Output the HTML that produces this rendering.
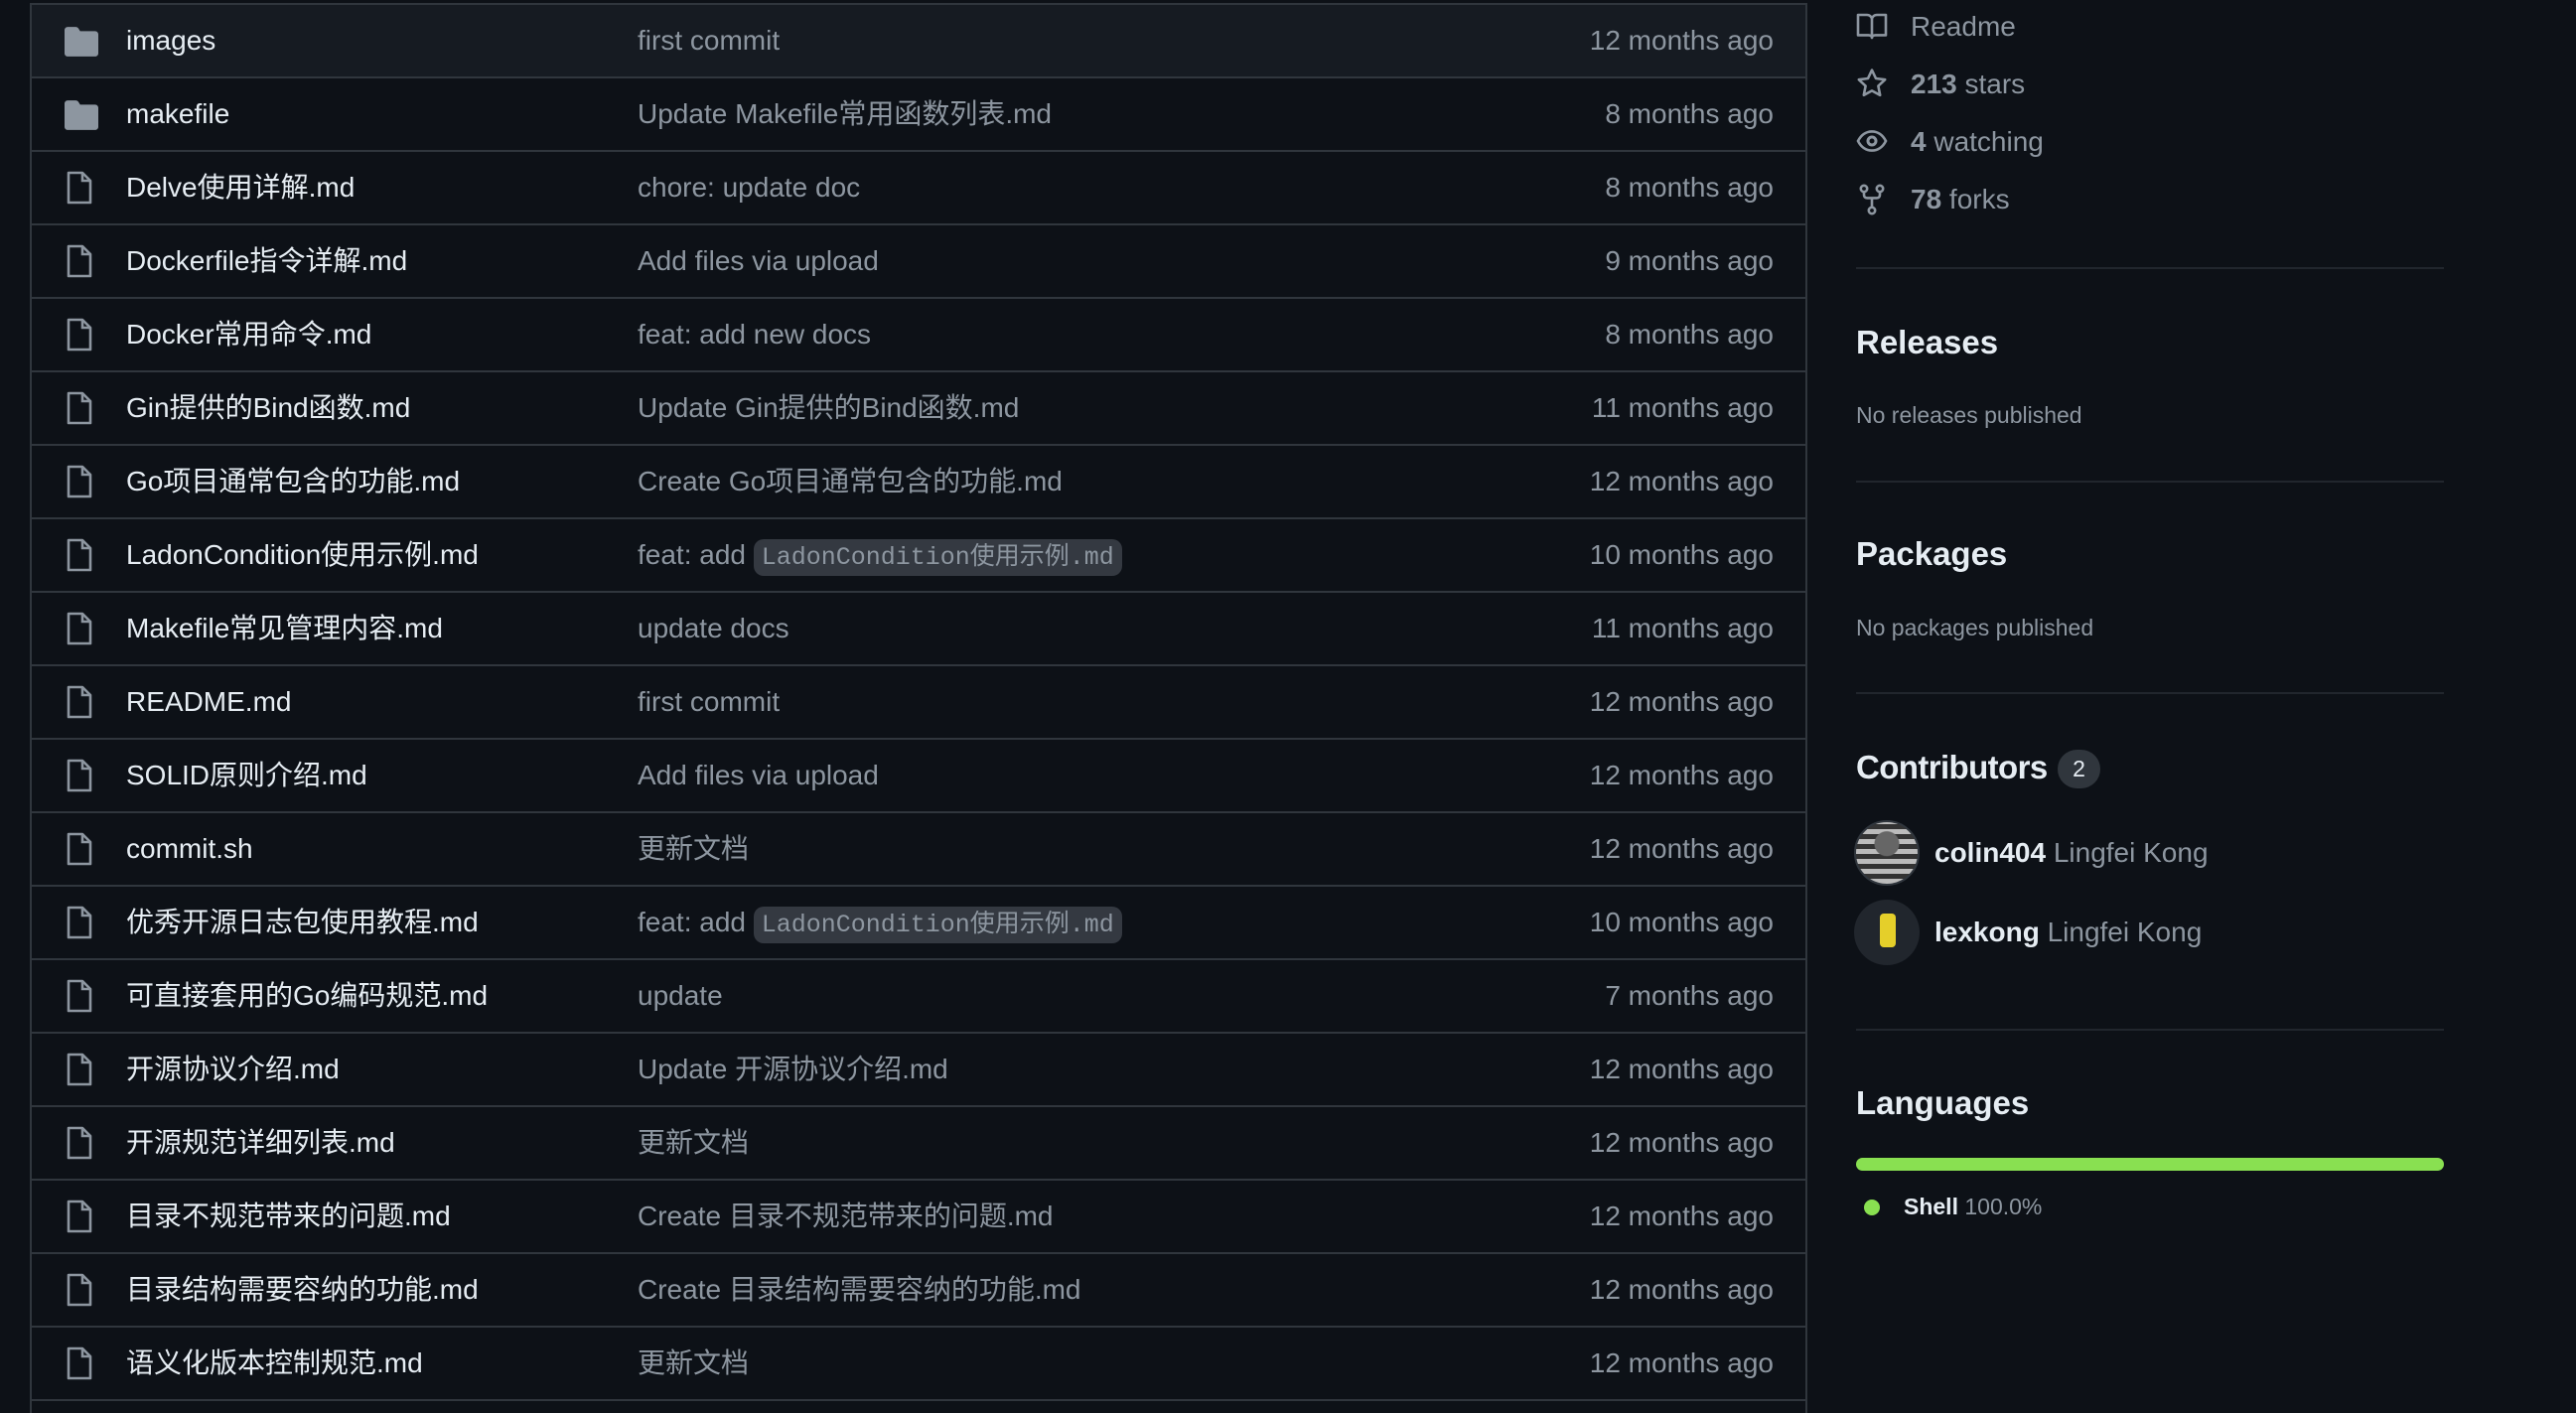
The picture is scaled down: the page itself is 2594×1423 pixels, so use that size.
<!DOCTYPE html>
<html><head><meta charset="utf-8"><style>
*{margin:0;padding:0;box-sizing:border-box}
body{width:2594px;height:1398px;background:#0d1117;overflow:hidden;font-family:"Liberation Sans","Noto Sans CJK SC",sans-serif;position:relative;color:#e6edf3}
.tbl{position:absolute;left:30px;top:3px;width:1790px;height:1420px;border-left:2px solid #30363d;border-right:2px solid #30363d;border-top:2px solid #30363d}
.row{position:absolute;left:0;width:1786px;height:74px;border-bottom:2px solid #30363d}
.row .ic{position:absolute;left:33px;top:22px}
.row .nm{position:absolute;left:95px;top:0;line-height:72px;font-size:28px;color:#e6edf3}
.row .msg{position:absolute;left:610px;top:0;line-height:72px;font-size:28px;color:#8d96a0;white-space:nowrap}
.row .dt{position:absolute;right:32px;top:0;line-height:72px;font-size:28px;color:#8d96a0}
code{font-family:"Liberation Mono","Noto Sans CJK SC",monospace;font-size:25px;background:#343941;border-radius:10px;padding:4px 8px;color:#8d96a0}
.sb{position:absolute;left:1869px;color:#8d96a0;font-size:28px}
.h{position:absolute;left:1869px;font-size:33px;font-weight:bold;color:#e6edf3}
.div{position:absolute;left:1869px;width:592px;height:2px;background:#21262d}
.sm{position:absolute;left:1869px;font-size:23px;color:#8d96a0}
</style></head><body>
<div class="tbl">
<div class="row" style="top:0;background:#161b22"><svg class="ic" width="34" height="30" viewBox="0 0 16 14" style="top:22px"><path d="M0 1.5C0 .7.7 0 1.5 0h3.8c.5 0 .9.2 1.2.6L7.4 2H14.5c.8 0 1.5.7 1.5 1.5v9c0 .8-.7 1.5-1.5 1.5h-13C.7 14 0 13.3 0 12.5z" fill="#8d96a0"/></svg><span class="nm">images</span><span class="msg">first commit</span><span class="dt">12 months ago</span></div>
<div class="row" style="top:74px"><svg class="ic" width="34" height="30" viewBox="0 0 16 14" style="top:22px"><path d="M0 1.5C0 .7.7 0 1.5 0h3.8c.5 0 .9.2 1.2.6L7.4 2H14.5c.8 0 1.5.7 1.5 1.5v9c0 .8-.7 1.5-1.5 1.5h-13C.7 14 0 13.3 0 12.5z" fill="#8d96a0"/></svg><span class="nm">makefile</span><span class="msg">Update Makefile常用函数列表.md</span><span class="dt">8 months ago</span></div>
</div>
<script>
var d=[["Delve使用详解.md","chore: update doc","8 months ago"],["Dockerfile指令详解.md","Add files via upload","9 months ago"],["Docker常用命令.md","feat: add new docs","8 months ago"],["Gin提供的Bind函数.md","Update Gin提供的Bind函数.md","11 months ago"],["Go项目通常包含的功能.md","Create Go项目通常包含的功能.md","12 months ago"],["LadonCondition使用示例.md","feat: add <code>LadonCondition使用示例.md</code>","10 months ago"],["Makefile常见管理内容.md","update docs","11 months ago"],["README.md","first commit","12 months ago"],["SOLID原则介绍.md","Add files via upload","12 months ago"],["commit.sh","更新文档","12 months ago"],["优秀开源日志包使用教程.md","feat: add <code>LadonCondition使用示例.md</code>","10 months ago"],["可直接套用的Go编码规范.md","update","7 months ago"],["开源协议介绍.md","Update 开源协议介绍.md","12 months ago"],["开源规范详细列表.md","更新文档","12 months ago"],["目录不规范带来的问题.md","Create 目录不规范带来的问题.md","12 months ago"],["目录结构需要容纳的功能.md","Create 目录结构需要容纳的功能.md","12 months ago"],["语义化版本控制规范.md","更新文档","12 months ago"]];
var t=document.querySelector('.tbl'),h='';
d.forEach(function(r,i){h+='<div class="row" style="top:'+(148+i*74)+'px"><svg class="ic" width="28" height="34" viewBox="0 0 14 17" style="left:34px;top:19px"><path d="M1.5 1h7L12.5 5v11h-11z" fill="none" stroke="#8d96a0" stroke-width="1.3" stroke-linejoin="round"/><path d="M8.5 1v4h4" fill="none" stroke="#8d96a0" stroke-width="1.3"/></svg><span class="nm">'+r[0]+'</span><span class="msg">'+r[1]+'</span><span class="dt">'+r[2]+'</span></div>'});
t.insertAdjacentHTML('beforeend',h);
</script>
<svg style="position:absolute;left:1869px;top:12px" width="32" height="28" viewBox="0 0 16 14"><path d="M1 1.5h4.5c1.3 0 2.5 1 2.5 2.3V13c0-.8-.8-1.3-1.7-1.3H1zM15 1.5h-4.5C9.2 1.5 8 2.5 8 3.8V13c0-.8.8-1.3 1.7-1.3H15z" fill="none" stroke="#8d96a0" stroke-width="1.3" stroke-linejoin="round"/></svg>
<div class="sb" style="left:1924px;top:11px">Readme</div>
<svg style="position:absolute;left:1869px;top:68px" width="32" height="32" viewBox="0 0 16 16"><path d="M8 1.3l2 4.2 4.6.6-3.4 3.2.9 4.6L8 11.7 3.9 13.9l.9-4.6L1.4 6.1 6 5.5z" fill="none" stroke="#8d96a0" stroke-width="1.3" stroke-linejoin="round"/></svg>
<div class="sb" style="left:1924px;top:69px"><b>213</b> stars</div>
<svg style="position:absolute;left:1869px;top:128px" width="32" height="28" viewBox="0 0 16 14"><path d="M1 7c1.5-3 4-4.8 7-4.8S13.5 4 15 7c-1.5 3-4 4.8-7 4.8S2.5 10 1 7z" fill="none" stroke="#8d96a0" stroke-width="1.3"/><circle cx="8" cy="7" r="2" fill="none" stroke="#8d96a0" stroke-width="1.5"/></svg>
<div class="sb" style="left:1924px;top:127px"><b>4</b> watching</div>
<svg style="position:absolute;left:1871px;top:185px" width="28" height="32" viewBox="0 0 14 16"><circle cx="3" cy="2.5" r="1.6" fill="none" stroke="#8d96a0" stroke-width="1.3"/><circle cx="11" cy="2.5" r="1.6" fill="none" stroke="#8d96a0" stroke-width="1.3"/><circle cx="7" cy="13.5" r="1.6" fill="none" stroke="#8d96a0" stroke-width="1.3"/><path d="M3 4.1v1.5c0 1 .6 1.6 1.6 1.6h4.8c1 0 1.6-.6 1.6-1.6V4.1M7 7.2v4.7" fill="none" stroke="#8d96a0" stroke-width="1.3"/></svg>
<div class="sb" style="left:1924px;top:185px"><b>78</b> forks</div>
<div class="div" style="top:269px"></div>
<div class="h" style="top:326px">Releases</div>
<div class="sm" style="top:405px">No releases published</div>
<div class="div" style="top:484px"></div>
<div class="h" style="top:539px">Packages</div>
<div class="sm" style="top:619px">No packages published</div>
<div class="div" style="top:697px"></div>
<div class="h" style="top:754px;letter-spacing:-0.6px">Contributors</div>
<div style="position:absolute;left:2072px;top:755px;width:43px;height:39px;border-radius:20px;background:#30363d;color:#e6edf3;font-size:23px;text-align:center;line-height:39px">2</div>
<div style="position:absolute;left:1867px;top:826px;width:66px;height:66px;border-radius:50%;background:radial-gradient(circle at 50% 35%,#666 0 12px,transparent 13px),repeating-linear-gradient(0deg,#bbb 0 5px,#333 5px 10px);border:2px solid #30363d"></div>
<div style="position:absolute;left:1948px;top:843px;font-size:28px"><b style="color:#e6edf3">colin404</b> <span style="color:#8d96a0">Lingfei Kong</span></div>
<div style="position:absolute;left:1867px;top:906px;width:66px;height:66px;border-radius:50%;background:#21262d"><div style="position:absolute;left:26px;top:14px;width:16px;height:34px;background:#e5cf2a;border-radius:4px"></div></div>
<div style="position:absolute;left:1948px;top:923px;font-size:28px"><b style="color:#e6edf3">lexkong</b> <span style="color:#8d96a0">Lingfei Kong</span></div>
<div class="div" style="top:1036px"></div>
<div class="h" style="top:1092px">Languages</div>
<div style="position:absolute;left:1869px;top:1166px;width:592px;height:13px;border-radius:7px;background:#89e051"></div>
<div style="position:absolute;left:1877px;top:1208px;width:16px;height:16px;border-radius:50%;background:#89e051"></div>
<div style="position:absolute;left:1917px;top:1202px;font-size:23px"><b style="color:#e6edf3">Shell</b> <span style="color:#8d96a0">100.0%</span></div>
</body></html>
